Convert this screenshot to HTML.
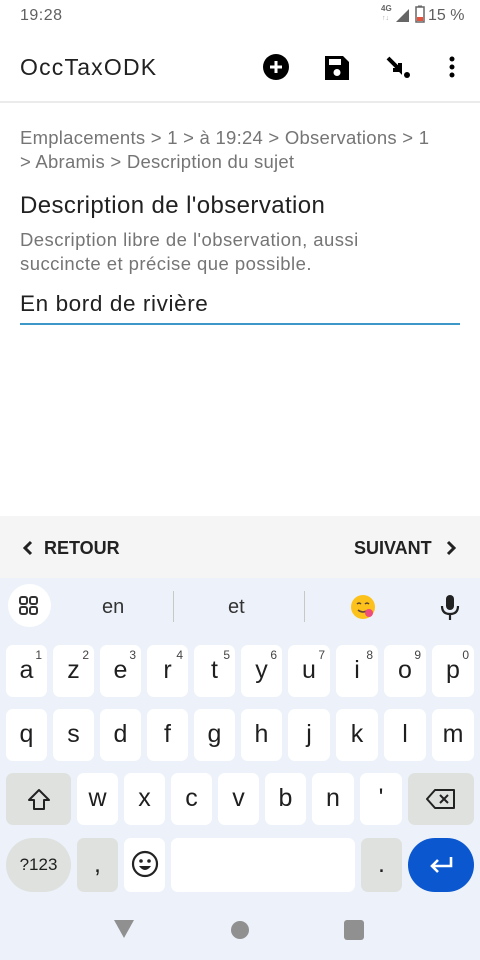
<!DOCTYPE html>
<html><head><meta charset="utf-8"><style>
*{margin:0;padding:0;box-sizing:border-box}
body{width:480px;height:960px;position:relative;background:#fff;font-family:"Liberation Sans",Roboto,sans-serif;overflow:hidden}
.a{position:absolute;white-space:nowrap}
.k{position:absolute;background:#fff;border-radius:7px;text-align:center;color:#1f1f1f;font-size:25px}
.k .l{position:absolute;left:0;right:0;top:11px}
.k .n{position:absolute;right:5px;top:3px;font-size:12px;color:#444}
.g{background:#dfe1df}
</style></head><body>
<!-- status bar -->
<div class="a" style="left:20px;top:7px;font-size:16px;color:#5f5f5f;letter-spacing:0.5px">19:28</div>
<div class="a" style="left:381px;top:4px;font-size:8px;font-weight:bold;color:#666">4G</div>
<div class="a" style="left:382px;top:15px;font-size:7px;color:#aaa">↑↓</div>
<svg class="a" style="left:395px;top:7px" width="16" height="16"><path d="M1 15 L14 2 L14 15 Z" fill="#666"/></svg>
<svg class="a" style="left:415px;top:5px" width="10" height="18"><rect x="1" y="2" width="8" height="15" fill="none" stroke="#666" stroke-width="1.5"/><rect x="3" y="0.5" width="4" height="2" fill="#666"/><rect x="2" y="12" width="6" height="4" fill="#e5533c"/></svg>
<div class="a" style="left:428px;top:7px;font-size:16px;color:#5f5f5f">15 %</div>
<!-- app bar -->
<div class="a" style="left:20px;top:54px;font-size:23px;color:#212121;letter-spacing:1.2px">OccTaxODK</div>
<svg class="a" style="left:262px;top:53px" width="28" height="28"><circle cx="14" cy="14" r="13" fill="#000"/><path d="M14 8v12M8 14h12" stroke="#fff" stroke-width="3"/></svg>
<svg class="a" style="left:324px;top:55px" width="26" height="26"><path d="M1 1h18l6 6v18H1z" fill="#000"/><rect x="5" y="4" width="12" height="6" fill="#fff"/><circle cx="13" cy="17.5" r="3.5" fill="#fff"/></svg>
<svg class="a" style="left:385px;top:55px" width="28" height="28"><path d="M3 3 L15 15 L15 8 M15 15 L8 15" stroke="#000" stroke-width="4" fill="none"/><circle cx="22" cy="20" r="3" fill="#000"/></svg>
<svg class="a" style="left:446px;top:55px" width="12" height="24"><circle cx="6" cy="4" r="2.5" fill="#000"/><circle cx="6" cy="12" r="2.5" fill="#000"/><circle cx="6" cy="20" r="2.5" fill="#000"/></svg>
<div class="a" style="left:0;top:101px;width:480px;height:2px;background:#ebebeb"></div>
<!-- content -->
<div class="a" style="left:20px;top:126px;font-size:18.5px;line-height:24px;color:#757575;letter-spacing:0.25px">Emplacements &gt; 1 &gt; à 19:24 &gt; Observations &gt; 1<br>&gt; Abramis &gt; Description du sujet</div>
<div class="a" style="left:20px;top:192px;font-size:24px;color:#212121;letter-spacing:0.4px">Description de l'observation</div>
<div class="a" style="left:20px;top:228px;font-size:18.5px;line-height:24px;color:#757575;letter-spacing:0.45px">Description libre de l'observation, aussi<br>succincte et précise que possible.</div>
<div class="a" style="left:20px;top:291px;font-size:22.5px;color:#212121;letter-spacing:0.6px">En bord de rivière</div>
<div class="a" style="left:20px;top:323px;width:440px;height:2px;background:#3e97c9"></div>
<!-- bottom bar -->
<div class="a" style="left:0;top:516px;width:480px;height:62px;background:#f5f5f5"></div>
<svg class="a" style="left:22px;top:540px" width="12" height="16"><path d="M9 2 L3 8 L9 14" stroke="#222" stroke-width="3" fill="none"/></svg>
<div class="a" style="left:44px;top:538px;font-size:18px;font-weight:bold;color:#222">RETOUR</div>
<div class="a" style="left:354px;top:538px;font-size:18px;font-weight:bold;color:#222">SUIVANT</div>
<svg class="a" style="left:445px;top:540px" width="12" height="16"><path d="M3 2 L9 8 L3 14" stroke="#222" stroke-width="3" fill="none"/></svg>
<!-- keyboard -->
<div class="a" style="left:0;top:578px;width:480px;height:382px;background:#edf2fa"></div>
<div class="a" style="left:8px;top:584px;width:43px;height:43px;border-radius:50%;background:#fff"></div>
<svg class="a" style="left:18px;top:595px" width="22" height="22"><g fill="none" stroke="#333" stroke-width="2"><rect x="2" y="2" width="7" height="7" rx="2"/><rect x="12" y="2" width="7" height="7" rx="2"/><rect x="2" y="12" width="7" height="7" rx="2"/><rect x="12" y="12" width="7" height="7" rx="2"/></g></svg>
<div class="a" style="left:102px;top:596px;font-size:20px;color:#333">en</div>
<div class="a" style="left:173px;top:591px;width:1px;height:31px;background:#c8c8c8"></div>
<div class="a" style="left:228px;top:596px;font-size:20px;color:#333">et</div>
<div class="a" style="left:304px;top:591px;width:1px;height:31px;background:#c8c8c8"></div>
<svg class="a" style="left:350px;top:594px" width="28" height="28"><circle cx="13" cy="13" r="12" fill="#fcc21b"/><path d="M7 10q2-2 4 0M15 10q2-2 4 0" stroke="#5d4037" stroke-width="1.5" fill="none"/><path d="M8 16q5 4 10 0" stroke="#5d4037" stroke-width="1.5" fill="none"/><circle cx="19" cy="19" r="4" fill="#ed4c7c"/></svg>
<svg class="a" style="left:440px;top:594px" width="20" height="28"><rect x="6" y="1" width="8" height="15" rx="4" fill="#222"/><path d="M2 12q0 8 8 8q8 0 8-8M10 20v6" stroke="#222" stroke-width="2.2" fill="none"/></svg>

<div class="k" style="left:6px;top:645px;width:41px;height:52px"><span class="l">a</span><span class="n">1</span></div>
<div class="k" style="left:53px;top:645px;width:41px;height:52px"><span class="l">z</span><span class="n">2</span></div>
<div class="k" style="left:100px;top:645px;width:41px;height:52px"><span class="l">e</span><span class="n">3</span></div>
<div class="k" style="left:147px;top:645px;width:41px;height:52px"><span class="l">r</span><span class="n">4</span></div>
<div class="k" style="left:194px;top:645px;width:41px;height:52px"><span class="l">t</span><span class="n">5</span></div>
<div class="k" style="left:241px;top:645px;width:41px;height:52px"><span class="l">y</span><span class="n">6</span></div>
<div class="k" style="left:288px;top:645px;width:42px;height:52px"><span class="l">u</span><span class="n">7</span></div>
<div class="k" style="left:336px;top:645px;width:42px;height:52px"><span class="l">i</span><span class="n">8</span></div>
<div class="k" style="left:384px;top:645px;width:42px;height:52px"><span class="l">o</span><span class="n">9</span></div>
<div class="k" style="left:432px;top:645px;width:42px;height:52px"><span class="l">p</span><span class="n">0</span></div>

<div class="k" style="left:6px;top:709px;width:41px;height:52px"><span class="l">q</span></div>
<div class="k" style="left:53px;top:709px;width:41px;height:52px"><span class="l">s</span></div>
<div class="k" style="left:100px;top:709px;width:41px;height:52px"><span class="l">d</span></div>
<div class="k" style="left:147px;top:709px;width:41px;height:52px"><span class="l">f</span></div>
<div class="k" style="left:194px;top:709px;width:41px;height:52px"><span class="l">g</span></div>
<div class="k" style="left:241px;top:709px;width:41px;height:52px"><span class="l">h</span></div>
<div class="k" style="left:288px;top:709px;width:42px;height:52px"><span class="l">j</span></div>
<div class="k" style="left:336px;top:709px;width:42px;height:52px"><span class="l">k</span></div>
<div class="k" style="left:384px;top:709px;width:42px;height:52px"><span class="l">l</span></div>
<div class="k" style="left:432px;top:709px;width:42px;height:52px"><span class="l">m</span></div>

<div class="k g" style="left:6px;top:773px;width:65px;height:52px"><svg style="margin-top:14px" width="26" height="26"><path d="M13 3 L23 13 H18 V22 H8 V13 H3 Z" fill="none" stroke="#222" stroke-width="2" stroke-linejoin="round"/></svg></div>
<div class="k" style="left:77px;top:773px;width:41px;height:52px"><span class="l">w</span></div>
<div class="k" style="left:124px;top:773px;width:41px;height:52px"><span class="l">x</span></div>
<div class="k" style="left:171px;top:773px;width:41px;height:52px"><span class="l">c</span></div>
<div class="k" style="left:218px;top:773px;width:41px;height:52px"><span class="l">v</span></div>
<div class="k" style="left:265px;top:773px;width:41px;height:52px"><span class="l">b</span></div>
<div class="k" style="left:312px;top:773px;width:42px;height:52px"><span class="l">n</span></div>
<div class="k" style="left:360px;top:773px;width:42px;height:52px"><span class="l">'</span></div>
<div class="k g" style="left:408px;top:773px;width:66px;height:52px"><svg style="margin-top:15px" width="30" height="22"><path d="M9 2 H28 V20 H9 L1 11 Z" fill="none" stroke="#222" stroke-width="2" stroke-linejoin="round"/><path d="M14 7 L22 15 M22 7 L14 15" stroke="#222" stroke-width="2"/></svg></div>

<div class="k g" style="left:6px;top:838px;width:65px;height:54px;border-radius:27px;font-size:17px"><span class="l" style="top:17px">?123</span></div>
<div class="k g" style="left:77px;top:838px;width:41px;height:54px"><span class="l" style="top:12px">,</span></div>
<div class="k" style="left:124px;top:838px;width:41px;height:54px"><svg style="margin-top:12px" width="28" height="28"><circle cx="14" cy="14" r="12" fill="none" stroke="#222" stroke-width="2.2"/><circle cx="10" cy="11" r="1.8" fill="#222"/><circle cx="18" cy="11" r="1.8" fill="#222"/><path d="M8 16 H20 Q14 24 8 16Z" fill="#222"/></svg></div>
<div class="k" style="left:171px;top:838px;width:184px;height:54px"></div>
<div class="k g" style="left:361px;top:838px;width:41px;height:54px"><span class="l" style="top:12px">.</span></div>
<div class="k" style="left:408px;top:838px;width:66px;height:54px;border-radius:27px;background:#0b57d0"><svg style="margin-top:15px" width="26" height="24"><path d="M23 4 V13 H4 M10 7 L4 13 L10 19" stroke="#fff" stroke-width="2.6" fill="none"/></svg></div>

<!-- nav -->
<svg class="a" style="left:113px;top:919px" width="22" height="20"><path d="M1 1 H21 L11 19 Z" fill="#909090"/></svg>
<div class="a" style="left:231px;top:921px;width:18px;height:18px;border-radius:50%;background:#909090"></div>
<div class="a" style="left:344px;top:920px;width:20px;height:20px;border-radius:3px;background:#909090"></div>
</body></html>
